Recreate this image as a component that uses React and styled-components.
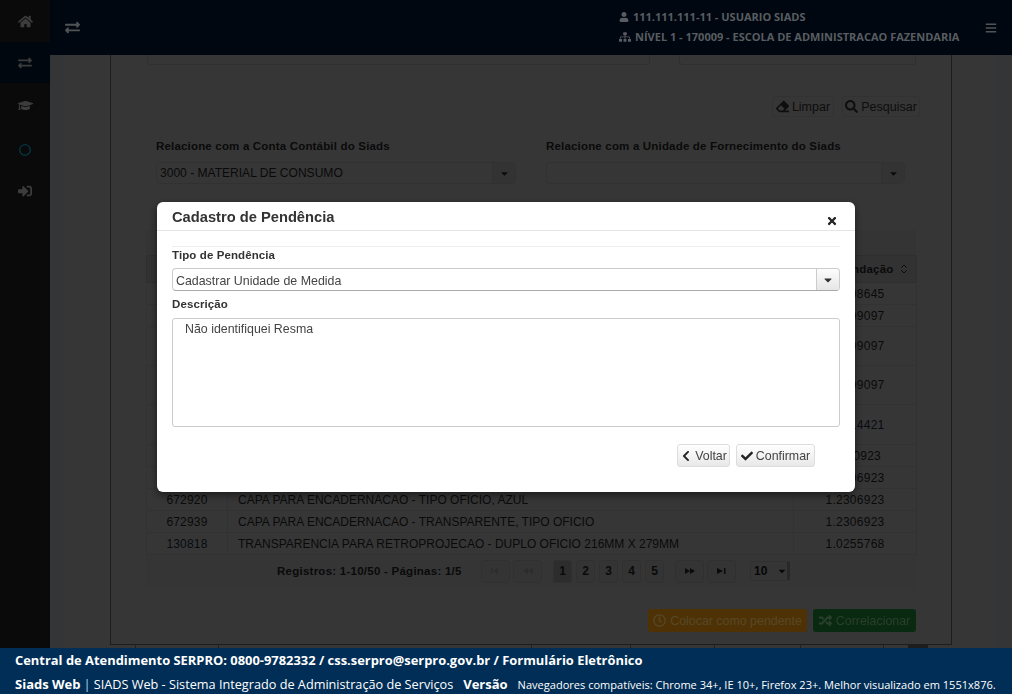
import React from 'react'
import styled, { createGlobalStyle } from 'styled-components'
import {
  FaHome, FaExchangeAlt, FaGraduationCap, FaRegCircle, FaSignInAlt, FaUser, FaSitemap, FaBars,
  FaEraser, FaSearch, FaCaretDown, FaChevronLeft, FaCheck, FaTimes, FaRegClock, FaRandom,
} from 'react-icons/fa'
import { ChevronsUpDown } from 'lucide-react'

const rows = [
  { h: 22, value: '1.2308645' },
  { h: 22, value: '1.2309097' },
  { h: 39, value: '1.2309097' },
  { h: 39, value: '1.2309097' },
  { h: 40, value: '1.2314421', link: true },
  { h: 22, value: '1.030923' },
  { h: 22, value: '1.2306923' },
  { h: 22, code: '672920', name: 'CAPA PARA ENCADERNACAO - TIPO OFICIO, AZUL', value: '1.2306923' },
  { h: 22, code: '672939', name: 'CAPA PARA ENCADERNACAO - TRANSPARENTE, TIPO OFICIO', value: '1.2306923' },
  { h: 22, code: '130818', name: 'TRANSPARENCIA PARA RETROPROJECAO - DUPLO OFICIO 216MM X 279MM', value: '1.0255768', link: true },
]

const tailCells = [26, 83, 313, 99, 84, 86, 83]

const PagerGlyph = ({ kind }) => {
  const paths = {
    first: 'M1 1h1.5v6H1zM8 1v6L3 4z',
    prev: 'M6 1v6L1 4zM11 1v6L6 4z',
    next: 'M1 1v6l5-3zM6 1v6l5-3z',
    last: 'M1 1v6l6-3zM8 1h1.5v6H8z',
  }
  return (
    <svg width="12" height="8" viewBox="0 0 12 8" fill="currentColor">
      <path d={paths[kind]} />
    </svg>
  )
}

const App = () => {
  return (
    <Shell>
      <GlobalStyle />
      <Main>
        <Sidebar>
          <SideItem $h={42}><FaHome size={15} /></SideItem>
          <SideItem $h={41} $active><FaExchangeAlt size={14} /></SideItem>
          <SideItem $h={44}><FaGraduationCap size={15} /></SideItem>
          <SideItem $h={45} $accent><FaRegCircle size={12} /></SideItem>
          <SideItem $h={38}><FaSignInAlt size={14} /></SideItem>
        </Sidebar>
        <Workspace>
          <TopBar>
            <TopIcon><FaExchangeAlt size={15} /></TopIcon>
            <UserBox>
              <UserLine><FaUser size={10} /> 111.111.111-11 - USUARIO SIADS</UserLine>
              <UserLine><FaSitemap size={12} /> NÍVEL 1 - 170009 - ESCOLA DE ADMINISTRACAO FAZENDARIA</UserLine>
            </UserBox>
            <MenuIcon><FaBars size={12} /></MenuIcon>
          </TopBar>
          <Content>
            <Panel>
              <ClippedRow>
                <ClippedInput $w={501} />
                <ClippedInput $w={235} />
              </ClippedRow>
              <SearchActions>
                <GhostButton $w={62}><FaEraser size={13} /> Limpar</GhostButton>
                <GhostButton $w={78}><FaSearch size={13} /> Pesquisar</GhostButton>
              </SearchActions>
              <Filters>
                <Filter>
                  <FilterLabel>Relacione com a Conta Contábil do Siads</FilterLabel>
                  <FilterSelect>
                    <span>3000 - MATERIAL DE CONSUMO</span>
                    <FilterCaret><FaCaretDown size={11} /></FilterCaret>
                  </FilterSelect>
                </Filter>
                <Filter>
                  <FilterLabel>Relacione com a Unidade de Fornecimento do Siads</FilterLabel>
                  <FilterSelect>
                    <span />
                    <FilterCaret><FaCaretDown size={11} /></FilterCaret>
                  </FilterSelect>
                </Filter>
              </Filters>
              <TableCaption />
              <Table>
                <colgroup>
                  <col width="81" />
                  <col width="566" />
                  <col width="123" />
                </colgroup>
                <thead>
                  <tr>
                    <HeadCell />
                    <HeadCell />
                    <SortHeadCell>Recomendação <ChevronsUpDown size={12} strokeWidth={2} /></SortHeadCell>
                  </tr>
                </thead>
                <tbody>
                  {rows.map((r, i) => (
                    <tr key={i}>
                      <CodeCell $h={r.h} $link={r.link}>{r.code}</CodeCell>
                      <NameCell $h={r.h}>{r.name}</NameCell>
                      <ValueCell $h={r.h} $link={r.link && !r.code}>{r.value}</ValueCell>
                    </tr>
                  ))}
                </tbody>
              </Table>
              <Pager>
                <PagerInfo>Registros: 1-10/50 - Páginas: 1/5</PagerInfo>
                <PagerGroup $gap={3}>
                  <PagerIconButton $off><PagerGlyph kind="first" /></PagerIconButton>
                  <PagerIconButton $off><PagerGlyph kind="prev" /></PagerIconButton>
                </PagerGroup>
                <PagerGroup $gap={4}>
                  {[1, 2, 3, 4, 5].map((n) => (
                    <PageButton key={n} $current={n === 1}>{n}</PageButton>
                  ))}
                </PagerGroup>
                <PagerGroup $gap={3}>
                  <PagerIconButton><PagerGlyph kind="next" /></PagerIconButton>
                  <PagerIconButton><PagerGlyph kind="last" /></PagerIconButton>
                </PagerGroup>
                <PageSize>
                  10
                  <FaCaretDown size={10} />
                </PageSize>
              </Pager>
              <Actions>
                <ActionButton $bg="#4e3205" $fg="#584827" $w={159}><FaRegClock size={13} /> Colocar como pendente</ActionButton>
                <ActionButton $bg="#092a10" $fg="#2b3f2e" $w={103}><FaRandom size={13} /> Correlacionar</ActionButton>
              </Actions>
            </Panel>
            <PanelTail>
              {tailCells.map((w, i) => (
                <TailCell key={i} $w={w} />
              ))}
              <TailMark />
            </PanelTail>
          </Content>
        </Workspace>
      </Main>
      <Footer>
        <FooterLine>
          <FooterHeadline>Central de Atendimento SERPRO: 0800-9782332 / css.serpro@serpro.gov.br / Formulário Eletrônico</FooterHeadline>
        </FooterLine>
        <FooterLine>
          <strong>Siads Web</strong>
          <FooterPipe>|</FooterPipe>
          <FooterSystem>SIADS Web - Sistema Integrado de Administração de Serviços</FooterSystem>
          <VersionLabel>Versão</VersionLabel>
          <FooterNote>Navegadores compatíveis: Chrome 34+, IE 10+, Firefox 23+. Melhor visualizado em 1551x876.</FooterNote>
        </FooterLine>
      </Footer>
      <Backdrop />
      <Modal>
        <ModalHeader>
          <ModalTitle>Cadastro de Pendência</ModalTitle>
          <CloseIcon><FaTimes size={12} /></CloseIcon>
        </ModalHeader>
        <ModalBody>
          <ModalDivider />
          <ModalLabel>Tipo de Pendência</ModalLabel>
          <ModalSelect>
            <span>Cadastrar Unidade de Medida</span>
            <ModalCaret><FaCaretDown size={12} /></ModalCaret>
          </ModalSelect>
          <ModalLabel $top={6} $bottom={7}>Descrição</ModalLabel>
          <ModalTextarea>Não identifiquei Resma</ModalTextarea>
          <ModalActions>
            <ModalButton $w={53}><FaChevronLeft size={12} /> Voltar</ModalButton>
            <ModalButton $w={79}><FaCheck size={12} /> Confirmar</ModalButton>
          </ModalActions>
        </ModalBody>
      </Modal>
    </Shell>
  )
}

export default App

const GlobalStyle = createGlobalStyle`
  html, body {
    margin: 0;
    height: 100%;
    overflow: hidden;
  }
  body {
    font-family: "Liberation Sans", Arial, sans-serif;
    font-size: 12px;
    color: #333;
  }
`

const Shell = styled.div`
  height: 100vh;
  display: grid;
  grid-template-columns: minmax(0, 1fr);
  grid-template-rows: 1fr 46px;
`

const Main = styled.div`
  display: flex;
  min-height: 0;
`

const Sidebar = styled.nav`
  width: 50px;
  flex: none;
  background: #0a0a0b;
  position: relative;
  z-index: 3;
`

const SideItem = styled.div`
  height: ${(p) => p.$h}px;
  display: flex;
  align-items: center;
  justify-content: center;
  color: ${(p) => (p.$accent ? '#053d4b' : '#3c3c3c')};
  background: ${(p) => (p.$active ? '#00070f' : 'transparent')};
`

const Workspace = styled.div`
  flex: 1;
  min-width: 0;
  display: flex;
  flex-direction: column;
`

const TopBar = styled.header`
  height: 55px;
  flex: none;
  background: #000710;
  display: flex;
  align-items: center;
  position: relative;
  z-index: 3;
  font-family: "Open Sans", sans-serif;
  color: #595d61;
`

const TopIcon = styled.div`
  width: 44px;
  padding-left: 15px;
  display: flex;
  align-items: center;
  color: #505356;
`

const UserBox = styled.div`
  margin-left: auto;
  width: 360px;
  padding-bottom: 1px;
  display: flex;
  flex-direction: column;
  gap: 6px;
`

const UserLine = styled.div`
  font-size: 11px;
  font-weight: 700;
  line-height: 14px;
  display: flex;
  align-items: center;
  gap: 4px;
  white-space: nowrap;

  svg {
    flex: none;
  }
`

const MenuIcon = styled.div`
  width: 33px;
  padding-left: 6px;
  box-sizing: border-box;
  color: #505356;
  display: flex;
`

const Content = styled.main`
  flex: 1;
  min-height: 0;
  box-sizing: border-box;
  background: #fff;
  border-left: 15px solid #f4f9ff;
  border-right: 16px solid #f4f9ff;
  padding: 0 44px 0 45px;
  display: flex;
  flex-direction: column;
`

const Panel = styled.section`
  flex: 1;
  min-height: 0;
  border: 1px solid #8a8a8a;
  border-top: 0;
  padding: 0 35px;
  overflow: hidden;
`

const PanelTail = styled.div`
  height: 3px;
  flex: none;
  display: flex;
`

const TailCell = styled.div`
  width: ${(p) => p.$w}px;
  box-sizing: border-box;
  border-right: 1px solid #9a9a9a;
`

const TailMark = styled.div`
  width: 20px;
  margin-left: 24px;
  background: #888;
`

const ClippedRow = styled.div`
  display: flex;
  justify-content: space-between;
  padding-left: 1px;
`

const ClippedInput = styled.div`
  width: ${(p) => p.$w}px;
  height: 9px;
  border: 1px solid #ddd;
  border-top: 0;
  border-radius: 0 0 4px 4px;
`

const SearchActions = styled.div`
  display: flex;
  justify-content: flex-end;
  gap: 8px;
  margin: 31px -4px 0 0;
`

const GhostButton = styled.div`
  width: ${(p) => p.$w}px;
  height: 21px;
  box-sizing: border-box;
  border: 1px solid #eaeaea;
  border-radius: 3px;
  background: #fdfdfd;
  display: flex;
  align-items: center;
  justify-content: center;
  gap: 3px;
  font-size: 12.5px;
  color: #444;
`

const Filters = styled.div`
  display: grid;
  grid-template-columns: 360px 359px;
  column-gap: 30px;
  padding-left: 10px;
  margin-top: 22px;
`

const Filter = styled.div`
  display: flex;
  flex-direction: column;
`

const FilterLabel = styled.label`
  font-weight: 700;
  font-size: 11.5px;
  line-height: 14px;
  letter-spacing: 0.18px;
  color: #333;
  margin-bottom: 9px;
  white-space: nowrap;
`

const FilterSelect = styled.div`
  height: 22px;
  box-sizing: border-box;
  border: 1px solid #e8e8e8;
  border-radius: 4px;
  display: flex;
  align-items: center;
  justify-content: space-between;
  padding-left: 3px;
  font-size: 12.05px;
  color: #333;
`

const FilterCaret = styled.div`
  width: 22px;
  height: 100%;
  background: #f2f2f2;
  border-left: 1px solid #e8e8e8;
  display: flex;
  align-items: center;
  justify-content: center;
`

const TableCaption = styled.div`
  height: 25px;
  margin-top: 46px;
  background: #f6f6f6;
`

const Table = styled.table`
  width: 770px;
  table-layout: fixed;
  border-collapse: collapse;
  font-size: 12px;
`

const HeadCell = styled.th`
  height: 27px;
  padding: 0;
  box-sizing: border-box;
  background: #ececec;
  border: 1px solid #dcdcdc;
  font-size: 11.5px;
  font-weight: 700;
  letter-spacing: 0.2px;
  color: #333;
  white-space: nowrap;

  svg {
    vertical-align: middle;
    margin-left: 1px;
  }
`

const SortHeadCell = styled(HeadCell)`
  padding-left: 6px;
`

const BodyCell = styled.td`
  height: ${(p) => p.$h}px;
  padding: 0;
  box-sizing: border-box;
  border: 1px solid #ececec;
  color: #333;
`

const CodeCell = styled(BodyCell)`
  text-align: center;
  color: ${(p) => (p.$link ? '#223a55' : '#333')};
  letter-spacing: 0.2px;
`

const NameCell = styled(BodyCell)`
  padding-left: 10px;
  white-space: nowrap;
`

const ValueCell = styled(BodyCell)`
  text-align: center;
  letter-spacing: 0.25px;
  color: ${(p) => (p.$link ? '#223a55' : '#333')};
`

const Pager = styled.div`
  height: 34px;
  box-sizing: border-box;
  background: #f7f7f7;
  display: flex;
  align-items: center;
  padding: 0 0 2px 131px;
`

const PagerInfo = styled.div`
  width: 204px;
  font-size: 11.5px;
  font-weight: 700;
  letter-spacing: 0.25px;
  white-space: nowrap;
`

const PagerGroup = styled.div`
  display: flex;
  gap: ${(p) => p.$gap}px;
  margin-right: 11px;
`

const PagerIconButton = styled.div`
  width: 29px;
  height: 23px;
  box-sizing: border-box;
  border: 1px solid #e4e4e4;
  border-radius: 3px;
  background: #f4f4f4;
  display: flex;
  align-items: center;
  justify-content: center;
  color: ${(p) => (p.$off ? '#cfcfcf' : '#333')};
`

const PageButton = styled.div`
  width: 19px;
  height: 23px;
  box-sizing: border-box;
  border: 1px solid #e4e4e4;
  border-radius: 3px;
  background: ${(p) => (p.$current ? '#d2d2d2' : '#f4f4f4')};
  display: flex;
  align-items: center;
  justify-content: center;
  font-size: 12px;
  font-weight: 700;
  color: #333;
`

const PageSize = styled.div`
  width: 40px;
  height: 20px;
  margin-left: 3px;
  box-sizing: border-box;
  border: 1px solid #e4e4e4;
  border-right: 3px solid #bbb;
  border-radius: 3px;
  background: #f8f8f8;
  display: flex;
  align-items: center;
  justify-content: space-between;
  padding: 0 0 0 3px;
  font-size: 12px;
  font-weight: 700;
  color: #222;
`

const Actions = styled.div`
  display: flex;
  justify-content: flex-end;
  gap: 6px;
  margin-top: 20px;
`

const ActionButton = styled.div`
  width: ${(p) => p.$w}px;
  height: 23px;
  box-sizing: border-box;
  border-radius: 3px;
  background: ${(p) => p.$bg};
  position: relative;
  z-index: 3;
  display: flex;
  align-items: center;
  justify-content: center;
  gap: 4px;
  font-size: 12.4px;
  color: ${(p) => p.$fg};
  white-space: nowrap;
`

const Footer = styled.footer`
  background: #012e56;
  color: #fff;
  font-family: "Open Sans", sans-serif;
  font-size: 13px;
  padding: 2px 15px 0;
  position: relative;
  z-index: 3;
  display: flex;
  flex-direction: column;
  justify-content: center;
  gap: 4px;
`

const FooterLine = styled.div`
  line-height: 20px;
  white-space: nowrap;
  display: flex;
  align-items: baseline;
`

const FooterHeadline = styled.strong`
  font-size: 12.92px;
`

const FooterPipe = styled.span`
  margin: 0 3px;
  color: #a9d3ee;
`

const FooterSystem = styled.span`
  font-size: 12.7px;
`

const VersionLabel = styled.strong`
  margin: 0 10px;
`

const FooterNote = styled.span`
  font-size: 11.05px;
`

const Backdrop = styled.div`
  position: fixed;
  inset: 0;
  background: rgba(0, 0, 0, 0.79);
  z-index: 2;
`

const Modal = styled.div`
  position: fixed;
  top: 202px;
  left: 157px;
  width: 698px;
  height: 290px;
  z-index: 4;
  background: #fff;
  border-radius: 6px;
  box-shadow: 0 3px 9px rgba(0, 0, 0, 0.5);
  display: flex;
  flex-direction: column;
`

const ModalHeader = styled.div`
  height: 29px;
  flex: none;
  box-sizing: border-box;
  border-bottom: 1px solid #e5e5e5;
  display: flex;
  align-items: center;
  justify-content: space-between;
  padding: 2px 17px 0 15px;
`

const ModalTitle = styled.h4`
  margin: 0;
  font-size: 14.7px;
  font-weight: 700;
  color: #333;
`

const CloseIcon = styled.div`
  display: flex;
  color: #222;
  margin-top: 8px;
`

const ModalBody = styled.div`
  flex: 1;
  padding: 15px 15px 0;
  display: flex;
  flex-direction: column;
`

const ModalDivider = styled.div`
  height: 1px;
  background: #eee;
  margin-bottom: 1px;
`

const ModalLabel = styled.label`
  font-weight: 700;
  font-size: 11.5px;
  line-height: 14px;
  letter-spacing: 0.1px;
  color: #333;
  margin: ${(p) => p.$top || 0}px 0 ${(p) => p.$bottom || 6}px;
`

const ModalSelect = styled.div`
  height: 23px;
  box-sizing: border-box;
  border: 1px solid #ccc;
  border-bottom-color: #aaa;
  border-radius: 4px;
  display: flex;
  align-items: center;
  justify-content: space-between;
  padding-left: 3px;
  font-size: 12.4px;
  color: #444;

  span {
    padding-top: 2px;
  }
`

const ModalCaret = styled.div`
  width: 23px;
  height: 100%;
  box-sizing: border-box;
  background: linear-gradient(#fdfdfd, #e6e6e6);
  border-left: 1px solid #ccc;
  border-radius: 0 4px 4px 0;
  display: flex;
  align-items: center;
  justify-content: center;
  color: #333;
`

const ModalTextarea = styled.div`
  height: 109px;
  flex: none;
  box-sizing: border-box;
  border: 1px solid #ccc;
  border-radius: 3px;
  padding: 3px 12px;
  font-size: 12.4px;
  line-height: 14px;
  color: #444;
`

const ModalActions = styled.div`
  display: flex;
  justify-content: flex-end;
  gap: 6px;
  margin: 17px 25px 0 0;
`

const ModalButton = styled.div`
  width: ${(p) => p.$w}px;
  height: 23px;
  box-sizing: border-box;
  border: 1px solid #ddd;
  border-radius: 3px;
  background: linear-gradient(#fff, #e8e8e8);
  display: flex;
  align-items: center;
  justify-content: center;
  gap: 3px;
  font-size: 12.4px;
  color: #444;

  svg {
    color: #222;
  }
`
